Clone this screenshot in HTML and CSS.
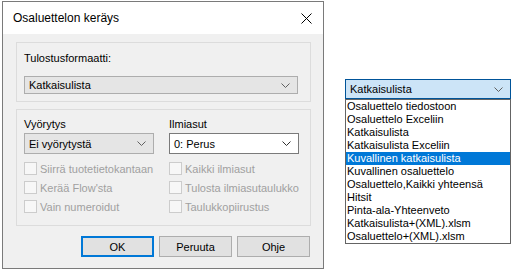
FILE: index.html
```html
<!DOCTYPE html>
<html lang="fi">
<head>
    <meta charset="UTF-8">
    <title>Osaluettelon keräys</title>
    <link rel="stylesheet" href="styles.css">
</head>
<body>
    <div class="dialog">
        <div class="titlebar">
            <span class="title">Osaluettelon keräys</span>
            <svg class="close" width="11" height="11" viewBox="0 0 11 11">
                <path d="M0.5 0.5 L10.5 10.5 M10.5 0.5 L0.5 10.5" stroke="#000" stroke-width="1" fill="none"/>
            </svg>
        </div>
        <div class="dialog-body">
            <div class="group">
                <div class="label">Tulostusformaatti:</div>
                <div class="combo combo-gray">
                    <span>Katkaisulista</span>
                    <svg class="chevron" width="9" height="5" viewBox="0 0 9 5"><path d="M0.5 0.5 L4.5 4.5 L8.5 0.5" stroke="#606060" fill="none"/></svg>
                </div>
            </div>
            <div class="group group-two">
                <div class="column">
                    <div class="label">Vyörytys</div>
                    <div class="combo combo-gray">
                        <span>Ei vyörytystä</span>
                        <svg class="chevron" width="9" height="5" viewBox="0 0 9 5"><path d="M0.5 0.5 L4.5 4.5 L8.5 0.5" stroke="#606060" fill="none"/></svg>
                    </div>
                    <label class="check"><span class="box"></span>Siirrä tuotetietokantaan</label>
                    <label class="check"><span class="box"></span>Kerää Flow'sta</label>
                    <label class="check"><span class="box"></span>Vain numeroidut</label>
                </div>
                <div class="column">
                    <div class="label">Ilmiasut</div>
                    <div class="combo combo-white">
                        <span>0: Perus</span>
                        <svg class="chevron" width="9" height="5" viewBox="0 0 9 5"><path d="M0.5 0.5 L4.5 4.5 L8.5 0.5" stroke="#303030" fill="none"/></svg>
                    </div>
                    <label class="check"><span class="box"></span>Kaikki ilmiasut</label>
                    <label class="check"><span class="box"></span>Tulosta ilmiasutaulukko</label>
                    <label class="check"><span class="box"></span>Taulukkopiirustus</label>
                </div>
            </div>
            <div class="buttons">
                <button class="btn btn-default">OK</button>
                <button class="btn">Peruuta</button>
                <button class="btn">Ohje</button>
            </div>
        </div>
    </div>

    <div class="dropdown">
        <div class="combo combo-open">
            <span>Katkaisulista</span>
            <svg class="chevron" width="9" height="5" viewBox="0 0 9 5"><path d="M0.5 0.5 L4.5 4.5 L8.5 0.5" stroke="#606060" fill="none"/></svg>
        </div>
        <ul class="options">
            <li>Osaluettelo tiedostoon</li>
            <li>Osaluettelo Exceliin</li>
            <li>Katkaisulista</li>
            <li>Katkaisulista Exceliin</li>
            <li class="selected">Kuvallinen katkaisulista</li>
            <li>Kuvallinen osaluettelo</li>
            <li>Osaluettelo,Kaikki yhteensä</li>
            <li>Hitsit</li>
            <li>Pinta-ala-Yhteenveto</li>
            <li>Katkaisulista+(XML).xlsm</li>
            <li>Osaluettelo+(XML).xlsm</li>
        </ul>
    </div>
</body>
</html>
```

FILE: styles.css
```css
body {
    margin: 0;
    padding: 1px 0 0 2px;
    background: #fff;
    font-family: "Liberation Sans", Arial, sans-serif;
    font-size: 11px;
    color: #000;
    display: flex;
    align-items: flex-start;
}
.dialog {
    width: 320px;
    height: 266px;
    border: 1px solid #7a7a7a;
    background: #f0f0f0;
    display: flex;
    flex-direction: column;
}
.titlebar {
    height: 32px;
    background: #fff;
    display: flex;
    align-items: center;
    justify-content: space-between;
    padding: 0 11px 0 10px;
    flex-shrink: 0;
}
.title {
    font-size: 12px;
}
.close {
    display: block;
}
.dialog-body {
    padding: 8px 12px 0 13px;
}
.group {
    border: 1px solid #dcdcdc;
    padding: 9px 12px 7px 7px;
}
.label {
    height: 13px;
    line-height: 13px;
}
.group > .combo {
    margin-top: 11px;
}
.combo {
    height: 18px;
    box-sizing: border-box;
    display: flex;
    align-items: center;
    justify-content: space-between;
    padding: 0 7px 0 4px;
    border: 1px solid #adadad;
}
.combo-gray {
    background: #e5e5e5;
}
.combo-white {
    background: #fff;
    border-color: #7a7a7a;
}
.chevron {
    display: block;
}
.group-two {
    margin-top: 7px;
    display: flex;
    gap: 15px;
    padding: 8px 11px 9px 7px;
}
.column {
    width: 130px;
}
.column .combo {
    height: 21px;
    margin-top: 2px;
}
.check {
    display: flex;
    align-items: center;
    height: 19px;
    color: #a0a0a0;
}
.column .combo + .check {
    margin-top: 5px;
}
.box {
    width: 11px;
    height: 11px;
    border: 1px solid #cccccc;
    background: #f7f7f7;
    margin-right: 3px;
}
.buttons {
    display: flex;
    justify-content: flex-end;
    gap: 5px;
    margin-top: 10px;
    margin-right: 1px;
}
.btn {
    width: 73px;
    height: 21px;
    border: 1px solid #adadad;
    background: #e1e1e1;
    font-family: "Liberation Sans", Arial, sans-serif;
    font-size: 11px;
    padding: 0;
    color: #000;
}
.btn-default {
    border: 2px solid #0078d7;
}
.dropdown {
    margin-left: 21px;
    margin-top: 78px;
    width: 166px;
}
.combo-open {
    height: 20px;
    background: #cce4f7;
    border-color: #005499;
}
.options {
    list-style: none;
    margin: 0;
    padding: 0;
    border: 1px solid #646464;
    background: #fff;
}
.options li {
    height: 13px;
    line-height: 13px;
    padding-left: 1px;
    white-space: nowrap;
}
.options li.selected {
    background: #0078d7;
    color: #fff;
}
```
